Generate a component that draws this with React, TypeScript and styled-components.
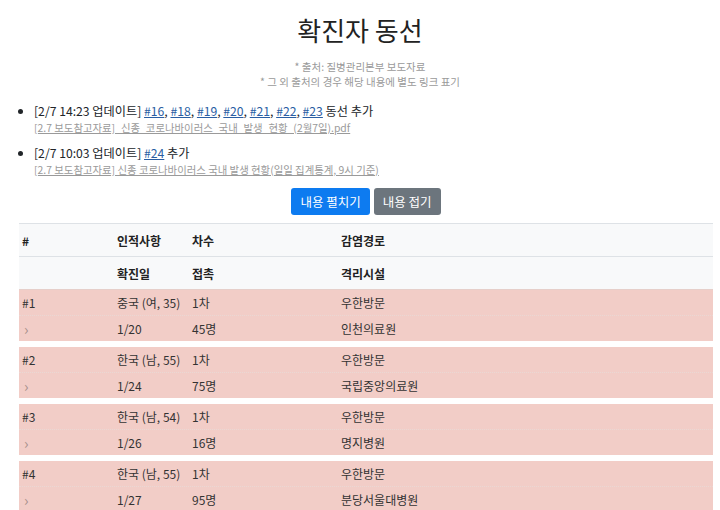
import styled, { createGlobalStyle } from "styled-components";

const GlobalStyle = createGlobalStyle`
  body {
    margin: 0;
    background: #fff;
    color: #212529;
    font-family: "Noto Sans CJK KR", "Noto Sans", sans-serif;
  }
`;

const Page = styled.div`
  width: 720px;
  padding-top: 14px;
`;

const Title = styled.h1`
  margin: 0;
  text-align: center;
  font-size: 26px;
  font-weight: 400;
  line-height: 31px;
  color: #222;
`;

const Sources = styled.div`
  margin-top: 14px;
  text-align: center;
  font-size: 10.5px;
  line-height: 15px;
  color: #9a9a9a;
`;

const UpdateList = styled.ul`
  margin: 13px 0 0;
  padding-left: 34px;
  list-style: disc;
`;

const Update = styled.li`
  font-size: 12.2px;
  line-height: 18px;
  & + & {
    margin-top: 9px;
  }
`;

const CaseLink = styled.a`
  color: #2a5ea3;
  text-decoration: underline;
`;

const Reference = styled.a`
  display: block;
  font-size: 10.4px;
  line-height: 15px;
  color: #9a9a9a;
  text-decoration: underline;
`;

const Buttons = styled.div`
  margin-top: 11px;
  display: flex;
  justify-content: center;
  gap: 4px;
  padding-left: 12px;
`;

const Button = styled.button<{ $variant: "primary" | "secondary" }>`
  height: 27px;
  padding: 0 9px;
  border: none;
  border-radius: 3px;
  font-family: inherit;
  font-size: 12.5px;
  color: #fff;
  background: ${(p) => (p.$variant === "primary" ? "#0d7bf0" : "#6c757d")};
`;

const Table = styled.div`
  margin: 8px 0 0 19px;
  width: 694px;
  font-size: 12px;
`;

const Row = styled.div<{ $head?: boolean }>`
  display: grid;
  grid-template-columns: 95px 75px 149px 1fr;
  align-items: center;
  height: ${(p) => (p.$head ? "32px" : "25px")};
  background: ${(p) => (p.$head ? "#f8f9fa" : "transparent")};
  border-top: ${(p) => (p.$head ? "1px solid #dee2e6" : "none")};
  font-weight: ${(p) => (p.$head ? 700 : 400)};
  color: ${(p) => (p.$head ? "#222" : "#333")};
`;

const Cell = styled.div`
  padding-left: 3px;
  white-space: nowrap;
`;

const Chevron = styled(Cell)`
  color: #a8918d;
  font-size: 15px;
  line-height: 1;
  padding-left: 5px;
`;

const Group = styled.div`
  margin-top: 6px;
  background: #f2cdc7;
  &:first-of-type {
    margin-top: 0;
  }
  & > div + div {
    border-top: 1px dotted #ead8d4;
  }
`;

const Groups = styled.div`
  border-top: 1px solid #e6cfca;
`;

const cases = [
  { no: 1, who: "중국 (여, 35)", order: "1차", route: "우한방문", date: "1/20", contact: "45명", hospital: "인천의료원" },
  { no: 2, who: "한국 (남, 55)", order: "1차", route: "우한방문", date: "1/24", contact: "75명", hospital: "국립중앙의료원" },
  { no: 3, who: "한국 (남, 54)", order: "1차", route: "우한방문", date: "1/26", contact: "16명", hospital: "명지병원" },
  { no: 4, who: "한국 (남, 55)", order: "1차", route: "우한방문", date: "1/27", contact: "95명", hospital: "분당서울대병원" },
];

const links = ["#16", "#18", "#19", "#20", "#21", "#22", "#23"];

export default function App() {
  return (
    <Page>
      <GlobalStyle />
      <Title>확진자 동선</Title>
      <Sources>
        <div>* 출처: 질병관리본부 보도자료</div>
        <div>* 그 외 출처의 경우 해당 내용에 별도 링크 표기</div>
      </Sources>
      <UpdateList>
        <Update>
          [2/7 14:23 업데이트]{" "}
          {links.map((l, i) => (
            <span key={l}>
              <CaseLink href="#">{l}</CaseLink>
              {i < links.length - 1 ? ", " : " "}
            </span>
          ))}
          동선 추가
          <Reference href="#">[2.7 보도참고자료]_신종_코로나바이러스_국내_발생_현황_(2월7일).pdf</Reference>
        </Update>
        <Update>
          [2/7 10:03 업데이트] <CaseLink href="#">#24</CaseLink> 추가
          <Reference href="#">[2.7 보도참고자료] 신종 코로나바이러스 국내 발생 현황(일일 집계통계, 9시 기준)</Reference>
        </Update>
      </UpdateList>
      <Buttons>
        <Button $variant="primary">내용 펼치기</Button>
        <Button $variant="secondary">내용 접기</Button>
      </Buttons>
      <Table>
        <Row $head>
          <Cell>#</Cell>
          <Cell>인적사항</Cell>
          <Cell>차수</Cell>
          <Cell>감염경로</Cell>
        </Row>
        <Row $head>
          <Cell />
          <Cell>확진일</Cell>
          <Cell>접촉</Cell>
          <Cell>격리시설</Cell>
        </Row>
        <Groups>
          {cases.map((c) => (
            <Group key={c.no}>
              <Row>
                <Cell>#{c.no}</Cell>
                <Cell>{c.who}</Cell>
                <Cell>{c.order}</Cell>
                <Cell>{c.route}</Cell>
              </Row>
              <Row>
                <Chevron>›</Chevron>
                <Cell>{c.date}</Cell>
                <Cell>{c.contact}</Cell>
                <Cell>{c.hospital}</Cell>
              </Row>
            </Group>
          ))}
        </Groups>
      </Table>
    </Page>
  );
}
